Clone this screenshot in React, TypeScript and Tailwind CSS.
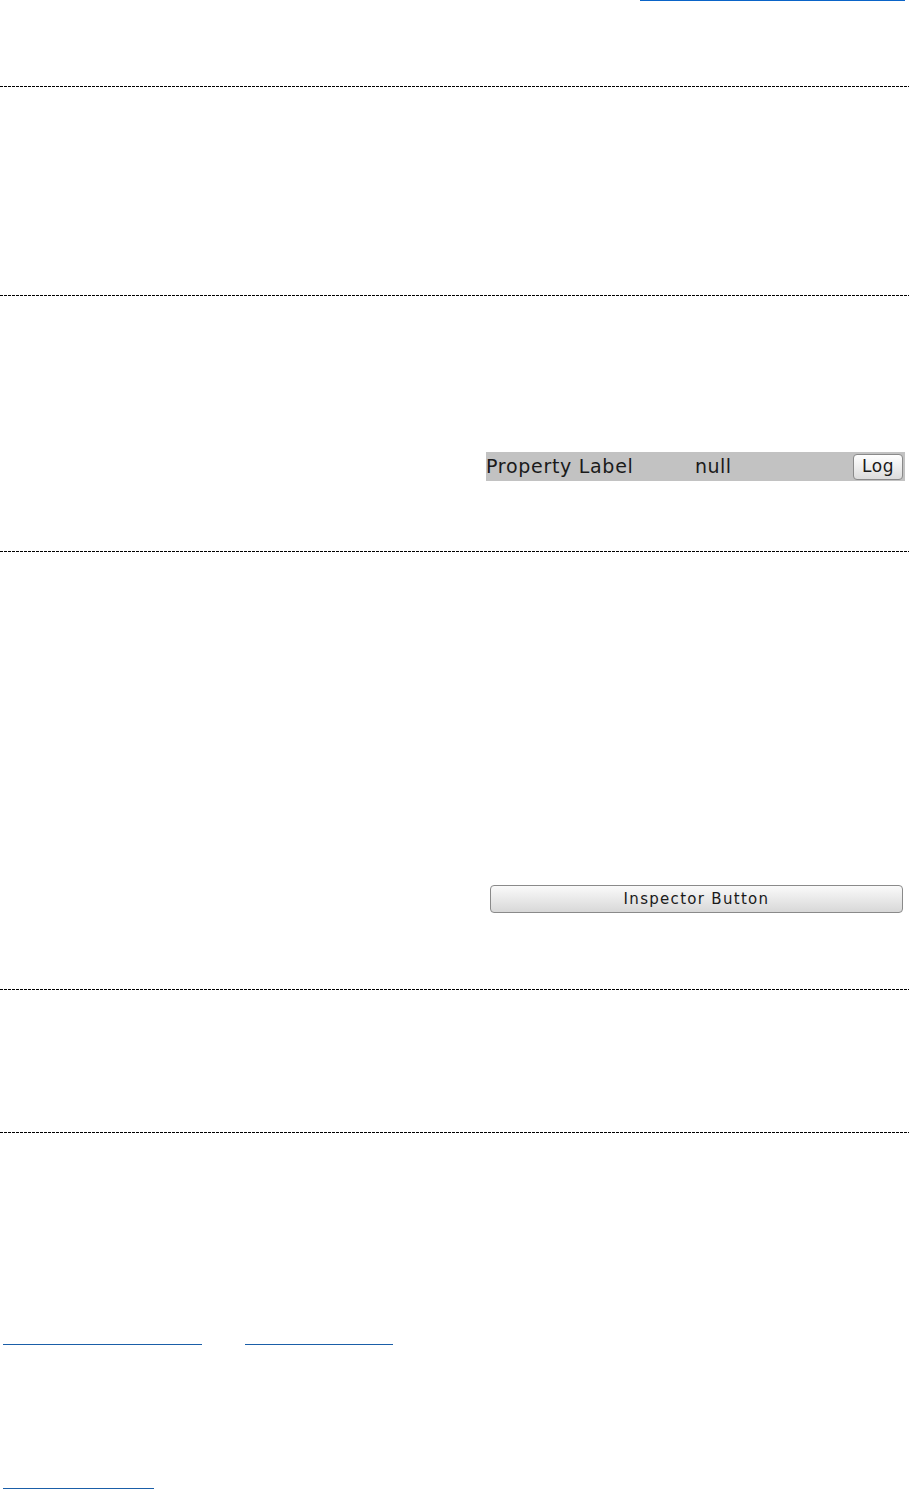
const dashed =
  "h-px w-full bg-[repeating-linear-gradient(90deg,#000_0_3px,transparent_3px_4px)]";

function Divider() {
  return <div className={dashed} />;
}

export default function App() {
  return (
    <div className="w-[909px] bg-white font-['DejaVu_Sans',sans-serif] text-[#1a1a1a]">
      {/* top link */}
      <div className="flex justify-end pr-[4px]">
        <a href="#" className="block h-px w-[265px] bg-[#0a64c8]" />
      </div>

      <div className="h-[85px]" />
      <Divider />

      <div className="h-[208px]" />
      <Divider />

      {/* property row */}
      <div className="flex pt-[156px] pb-[70px]">
        <div className="w-[486px]" />
        <div className="flex h-[29px] w-[419px] items-center bg-[#c2c2c2]">
          <span className="w-[209px] text-[19px] leading-none tracking-[0.7px]">Property Label</span>
          <span className="text-[19px] leading-none tracking-[0.5px]">null</span>
          <button className="ml-auto mr-[2px] flex h-[26px] w-[50px] items-center justify-center rounded-[4px] border border-[#8a8a8a] bg-[linear-gradient(#ffffff,#dcdcdc)] text-[17px] leading-none tracking-[0.5px]">
            Log
          </button>
        </div>
      </div>
      <Divider />

      {/* inspector button */}
      <div className="flex pt-[333px] pb-[76px]">
        <div className="w-[490px]" />
        <button className="flex h-[28px] w-[413px] items-center justify-center rounded-[4px] border border-[#8a8a8a] bg-[linear-gradient(#fafafa,#d8d8d8)] text-[15px] leading-none tracking-[1.3px]">
          Inspector Button
        </button>
      </div>
      <Divider />

      <div className="h-[142px]" />
      <Divider />

      {/* bottom links */}
      <div className="flex gap-[43px] pl-[3px] pt-[211px]">
        <a href="#" className="block h-px w-[199px] bg-[#1a5ea8]" />
        <a href="#" className="block h-px w-[148px] bg-[#1a5ea8]" />
      </div>
      <div className="pl-[3px] pt-[143px]">
        <a href="#" className="block h-px w-[151px] bg-[#1a5ea8]" />
      </div>
    </div>
  );
}
